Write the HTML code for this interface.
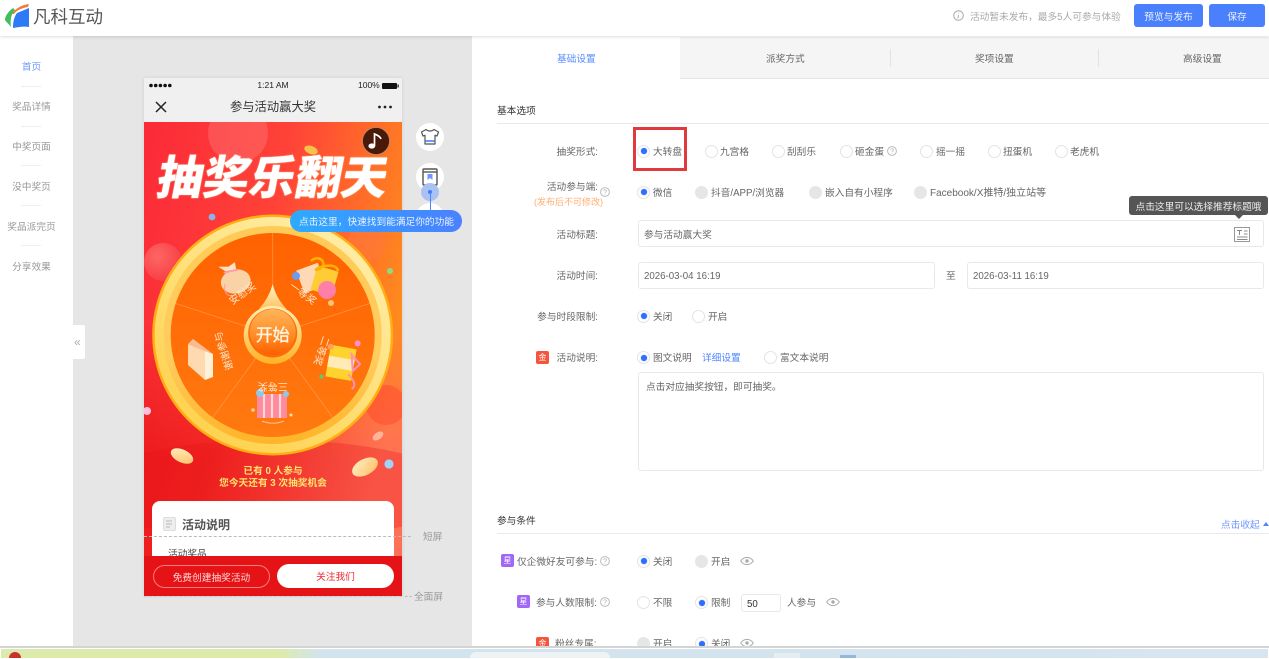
<!DOCTYPE html>
<html lang="zh-CN"><head><meta charset="utf-8"><title>凡科互动</title>
<style>
html,body{margin:0;padding:0;background:#fff}
#w{position:relative;width:1269px;height:659px;overflow:hidden;background:#fff;font:9.7px/14px "Liberation Sans","Noto Sans CJK SC",sans-serif;color:#666;filter:blur(.35px)}
#w div,#w span,#w i,#w svg{position:absolute;display:block}
.t{white-space:nowrap;height:14px;margin-top:2px}
.b{margin-top:0 !important}
.l{white-space:nowrap;height:14px;text-align:right;width:130px;left:468px;color:#666;margin-top:2px}
.r{width:13px;height:13px;box-sizing:border-box;border:1px solid #e3e3e3;border-radius:50%;background:#fff}
.on:after{content:"";position:absolute;left:2.5px;top:2.5px;width:6px;height:6px;border-radius:50%;background:#2f6fff;box-shadow:0 0 1px #2f6fff}
.d{background:#e6e6e6;border-color:#e6e6e6}
.in{box-sizing:border-box;border:1px solid #e8e8e8;border-radius:3px;background:#fff}
.ln{background:#e9e9e9;height:1px}
.sd{left:21px;width:20px;height:1px;background:#eee}
.st{left:0;width:63px;text-align:center;color:#999;height:14px;white-space:nowrap;margin-top:2px}
.bd{width:13px;height:13px;border-radius:2px;color:#fff;font-size:8px;line-height:13px;text-align:center}
</style></head><body><div id="w">

<!-- main backgrounds -->
<div style="left:73px;top:36px;width:399px;height:610px;background:#e6e6e6"></div>

<!-- sidebar -->
<div class="st" style="top:59px;color:#6f97ff">首页</div><div class="sd" style="top:86px"></div>
<div class="st" style="top:99px">奖品详情</div><div class="sd" style="top:126px"></div>
<div class="st" style="top:139px">中奖页面</div><div class="sd" style="top:165px"></div>
<div class="st" style="top:179px">没中奖页</div><div class="sd" style="top:205px"></div>
<div class="st" style="top:219px">奖品派完页</div><div class="sd" style="top:245px"></div>
<div class="st" style="top:259px">分享效果</div>
<div style="left:73px;top:325px;width:12px;height:34px;background:#fff;border-radius:0 2px 2px 0"></div>
<div class="t b" style="left:74px;top:335px;color:#aaa;font-size:12px">«</div>

<!-- phone -->
<div style="left:144px;top:78px;width:258px;height:518px;overflow:hidden;box-shadow:0 0 3px rgba(0,0,0,.12);background:#f0f0f0">
  <svg style="left:0;top:0" width="258" height="44" viewBox="0 0 258 44">
    <g fill="#111"><circle cx="7" cy="7.5" r="1.8"/><circle cx="11.7" cy="7.5" r="1.8"/><circle cx="16.4" cy="7.5" r="1.8"/><circle cx="21.1" cy="7.5" r="1.8"/><circle cx="25.8" cy="7.5" r="1.8"/>
    <rect x="238" y="5" width="15" height="6" rx="1"/><rect x="253.5" y="6.5" width="1.2" height="3"/></g>
    <path d="M12 24 L22 34 M22 24 L12 34" stroke="#222" stroke-width="1.5" fill="none"/>
    <g fill="#222"><circle cx="235.5" cy="29" r="1.4"/><circle cx="241" cy="29" r="1.4"/><circle cx="246.5" cy="29" r="1.4"/></g>
  </svg>
  <div class="t b" style="left:0;width:258px;top:0;text-align:center;font-size:8.5px;color:#222">1:21 AM</div>
  <div class="t b" style="left:214px;top:0;font-size:8.5px;color:#222">100%</div>
  <div class="t b" style="left:0;width:258px;top:22px;text-align:center;font-size:12.3px;color:#333">参与活动赢大奖</div>
</div>

<!-- phone art -->
<svg style="left:144px;top:122px" width="258" height="474" viewBox="144 122 258 474">
  <defs>
    <linearGradient id="bg" x1="0" y1="0" x2="1" y2=".38"><stop offset="0" stop-color="#fb2a38"/><stop offset=".5" stop-color="#ff4238"/><stop offset="1" stop-color="#ff8a1e"/></linearGradient>
    <linearGradient id="bg2" x1="0" y1="0" x2="1" y2=".55"><stop offset="0" stop-color="#e60d18"/><stop offset=".5" stop-color="#f02420"/><stop offset="1" stop-color="#ff7058"/></linearGradient>
    <linearGradient id="bgv" x1="0" y1="0" x2="0" y2="1"><stop offset="0" stop-color="#000"/><stop offset=".42" stop-color="#000"/><stop offset=".72" stop-color="#fff"/><stop offset="1" stop-color="#fff"/></linearGradient>
    <mask id="mk"><rect x="144" y="122" width="258" height="474" fill="url(#bgv)"/></mask>
    <linearGradient id="ring" x1=".9" y1="0" x2=".2" y2="1"><stop offset="0" stop-color="#fff0b0"/><stop offset=".5" stop-color="#ffe07a"/><stop offset="1" stop-color="#ffd04a"/></linearGradient>
    <linearGradient id="ring2" x1="0" y1="0" x2="0" y2="1"><stop offset="0" stop-color="#ffcb58"/><stop offset=".6" stop-color="#ffcc5e"/><stop offset="1" stop-color="#ffb428"/></linearGradient>
    <linearGradient id="pl" x1="0" y1="0" x2="0" y2="1"><stop offset="0" stop-color="#ff6200"/><stop offset="1" stop-color="#ff7a10"/></linearGradient>
    <linearGradient id="btn" x1="0" y1="0" x2="0" y2="1"><stop offset="0" stop-color="#ffb65a"/><stop offset=".6" stop-color="#ff8a24"/><stop offset="1" stop-color="#ff5f00"/></linearGradient>
    <linearGradient id="ptr" x1="0" y1="0" x2="0" y2="1"><stop offset="0" stop-color="#fff4d0"/><stop offset="1" stop-color="#ffc45e"/></linearGradient>
    <linearGradient id="bt2" x1="0" y1="0" x2="0" y2="1"><stop offset="0" stop-color="#fff0b8"/><stop offset="1" stop-color="#ffb224"/></linearGradient>
    <radialGradient id="bl" cx=".35" cy=".35" r=".8"><stop offset="0" stop-color="#ff8a80"/><stop offset="1" stop-color="#f23a4a"/></radialGradient>
    <linearGradient id="coin" x1="0" y1="0" x2="1" y2="1"><stop offset="0" stop-color="#fff0c8"/><stop offset="1" stop-color="#ffbe62"/></linearGradient>
  </defs>
  <rect x="144" y="122" width="258" height="474" fill="url(#bg)"/>
  <rect x="144" y="122" width="258" height="474" fill="url(#bg2)" mask="url(#mk)"/>
  <circle cx="238" cy="133" r="30" fill="#ff9a9a" opacity=".28"/>
  <circle cx="163" cy="262" r="19" fill="url(#bl)" opacity=".6"/>
  <circle cx="367" cy="242" r="19" fill="#ff7a3a" opacity=".6"/>
  <circle cx="386" cy="405" r="20" fill="#ff4a30" opacity=".55"/>
  <ellipse cx="272" cy="490" rx="190" ry="50" fill="#e8101c" opacity=".3"/>
  <!-- coins and beads -->
  <ellipse cx="182" cy="456" rx="12" ry="6.5" fill="url(#coin)" transform="rotate(25 182 456)"/>
  <ellipse cx="365" cy="467" rx="14" ry="8" fill="url(#coin)" transform="rotate(-28 365 467)"/>
  <ellipse cx="378" cy="436" rx="6" ry="3.5" fill="#ffb59a" transform="rotate(-35 378 436)"/>
  <ellipse cx="311" cy="150" rx="7" ry="4" fill="#f6c24c" transform="rotate(20 311 150)"/>
  <circle cx="212" cy="217" r="3.4" fill="#8fb0e8"/><circle cx="390" cy="271" r="3" fill="#8fdc7e"/>
  <circle cx="147" cy="411" r="4" fill="#ffc0de"/><circle cx="389" cy="464" r="4.6" fill="#9fd4f8"/>
  <!-- wheel -->
  <circle cx="272.7" cy="335" r="120.5" fill="#ffae14"/>
  <circle cx="272.7" cy="335" r="118" fill="url(#ring)"/>
  <circle cx="272.7" cy="335" r="109" fill="url(#ring2)"/>
  <circle cx="272.7" cy="335" r="102" fill="url(#pl)"/>
  <g stroke="#ff9a48" stroke-width=".8" opacity=".85">
    <path d="M272.7 335V233"/><path d="M272.7 335L369.7 303.5"/><path d="M272.7 335L332.7 417.5"/><path d="M272.7 335L212.7 417.5"/><path d="M272.7 335L175.7 303.5"/>
  </g>
  <!-- prize icons -->
  <g transform="translate(233 278) rotate(-12)">
    <ellipse cx="2" cy="4" rx="15" ry="12" fill="#f9d3a6"/><path d="M-6 -8L-12 -14L-2 -12L5 -15L5 -8Z" fill="#fbe2c4"/><path d="M-8 -7H7" stroke="#ff9ab0" stroke-width="1.6"/><path d="M-9 4C-13 14 -8 18 -2 17" stroke="#ff9ab0" fill="none"/>
  </g>
  <g transform="translate(317 278)">
    <rect x="-17" y="-14" width="23" height="24" fill="#ffd9b6" transform="rotate(-20)"/><rect x="-3" y="-12" width="22" height="25" fill="#ffcc36" transform="rotate(16)"/>
    <path d="M-6 -17C4 -26 14 -10 -2 -8 M-2 -8C8 -14 20 -14 21 -7" stroke="#ffb300" stroke-width="2.5" fill="none"/>
    <circle cx="10" cy="12" r="9" fill="#ff7fa8"/><circle cx="-21" cy="-2" r="4" fill="#6c9cf0"/><circle cx="14" cy="25" r="3" fill="#ffc27a"/>
  </g>
  <g transform="translate(342 363) rotate(10)">
    <rect x="-14" y="-16" width="26" height="32" fill="#ffd22e"/><rect x="-14" y="-5" width="26" height="11" fill="#ffeab8"/>
    <path d="M8 -10L12 6L18 -2Z M8 10C16 16 18 20 14 24" fill="none" stroke="#ff8fb4" stroke-width="2"/>
    <circle cx="12" cy="-22" r="3" fill="#ff8fd0"/><circle cx="-18" cy="17" r="2" fill="#55d070"/><circle cx="-14" cy="-14" r="3" fill="#ffa060"/>
  </g>
  <g transform="translate(272 407)">
    <rect x="-15" y="-13" width="30" height="24" fill="#ff8a9c"/><path d="M-8 -13V11M0 -13V11M8 -13V11" stroke="#ffd8dc" stroke-width="2.2"/><path d="M-10 14C-2 17 4 17 12 14" stroke="#ffc0a0" fill="none"/>
    <circle cx="-12" cy="-14" r="4" fill="#8cc8e8"/><circle cx="14" cy="-13" r="3" fill="#8cc8e8"/><circle cx="-19" cy="3" r="1.8" fill="#ffd0a0"/><circle cx="19" cy="8" r="1.5" fill="#ffe0c0"/>
  </g>
  <g transform="translate(203 357)">
    <path d="M-15 -13L2 -6V23L-15 8Z" fill="#ffd9b0"/><path d="M2 -6L10 -3V20L2 23Z" fill="#fff0d8"/><path d="M-15 -13L-10 -18L10 -3L2 -6Z" fill="#f7bd90"/>
  </g>
  <g fill="#ffe8cc" font-size="10" text-anchor="middle" font-family="'Liberation Sans','Noto Sans CJK SC',sans-serif">
    <text transform="translate(272.7 335) rotate(-36) translate(0 -48)">安慰奖</text>
    <text transform="translate(272.7 335) rotate(36) translate(0 -48)">一等奖</text>
    <text transform="translate(272.7 335) rotate(108) translate(0 -48)">二等奖</text>
    <text transform="translate(272.7 335) rotate(180) translate(0 -48)">三等奖</text>
    <text transform="translate(272.7 335) rotate(252) translate(0 -48)">谢谢参与</text>
  </g>
  <path d="M272.7 284Q269 298 259 309H286.5Q276 298 272.7 284Z" fill="url(#ptr)"/>
  <circle cx="272.7" cy="335" r="29" fill="url(#bt2)"/>
  <circle cx="272.7" cy="333" r="24.5" fill="#ff6a08"/>
  <circle cx="272.7" cy="332" r="23" fill="url(#btn)"/>
  <text x="272.7" y="341" text-anchor="middle" font-size="17" fill="#fff3dc" stroke="#fff3dc" stroke-width=".4" font-family="'Liberation Sans','Noto Sans CJK SC',sans-serif">开始</text>
  <!-- music -->
  <circle cx="376" cy="141" r="13.5" fill="#4a1a08" stroke="#b98668" stroke-width=".8"/>
  <path d="M374.5 146V134C377 135 380 136 381 139" stroke="#fff" stroke-width="1.7" fill="none"/>
  <ellipse cx="371.8" cy="146" rx="3.4" ry="2.6" fill="#fff"/>
</svg>

<div class="t b" style="left:158px;top:148px;height:60px;font-size:46px;line-height:60px;font-weight:900;color:#fff;transform:skewX(-11deg);text-shadow:0 0 1.5px #ffd8a0">抽奖乐翻天</div>
<div class="t" style="left:144px;width:258px;top:463px;text-align:center;color:#ffe36e;font-weight:700">已有 0 人参与</div>
<div class="t" style="left:144px;width:258px;top:475px;text-align:center;color:#ffe36e;font-weight:700">您今天还有 3 次抽奖机会</div>

<div style="left:152px;top:501px;width:242px;height:60px;background:#fff;border-radius:8px 8px 0 0"></div>
<svg style="left:163px;top:517px" width="14" height="15" viewBox="0 0 14 15"><rect x=".5" y=".5" width="12" height="13" rx="1.5" fill="#eee" stroke="#ddd"/><path d="M3 4H9M3 7H9M3 10H7" stroke="#bbb"/></svg>
<div class="t b" style="left:182px;top:517px;height:17px;line-height:17px;font-size:12px;font-weight:700;color:#555">活动说明</div>
<div class="t" style="left:168px;top:546px;color:#444">活动奖品</div>
<div style="left:144px;top:556px;width:258px;height:40px;background:#e51216"></div>
<div class="t b" style="left:153px;top:565px;width:117px;height:23px;box-sizing:border-box;border:1px solid #f57e80;border-radius:12px;text-align:center;line-height:25px;color:#ffd8d8">免费创建抽奖活动</div>
<div class="t b" style="left:277px;top:564px;width:117px;height:24px;background:#fff;border-radius:12px;text-align:center;line-height:28px;color:#ee2a36">关注我们</div>
<div style="left:144px;top:536px;width:267px;height:0;border-top:1px dashed #bbb"></div>
<div class="t" style="left:423px;top:529px;color:#999">短屏</div>
<div style="left:405px;top:596px;width:7px;height:0;border-top:1px dashed #bbb"></div>
<div style="left:144px;top:596px;width:258px;height:0;border-top:1px dashed #ccc"></div>
<div class="t" style="left:414px;top:589px;color:#999">全面屏</div>

<!-- side icons -->
<div style="left:416px;top:123px;width:28px;height:28px;border-radius:50%;background:#fff"></div>
<div style="left:416px;top:163px;width:28px;height:28px;border-radius:50%;background:#fff"></div>
<div style="left:416px;top:203px;width:28px;height:28px;border-radius:50%;background:#fff"></div>
<svg style="left:420px;top:127px" width="20" height="20" viewBox="0 0 20 20"><path d="M6 2.5C8 4.5 12 4.5 14 2.5L18.5 5L17 9L15 8.3V17H5V8.3L3 9L1.5 5Z" fill="none" stroke="#555" stroke-width="1.2" stroke-linejoin="round"/><rect x="5.6" y="13" width="8.8" height="2" fill="#6f97ff"/></svg>
<svg style="left:422px;top:168px" width="16" height="18" viewBox="0 0 16 18"><rect x="1" y="1" width="14" height="16" rx="1" fill="none" stroke="#555" stroke-width="1.4"/><path d="M1 4H15" stroke="#555" stroke-width="1.4"/><path d="M5.5 6V12L8 10L10.5 12V6Z" fill="#6f97ff"/></svg>
<div style="left:421px;top:183px;width:18px;height:18px;border-radius:50%;background:#a9c2f3"></div>
<div style="left:428px;top:190px;width:4px;height:4px;border-radius:50%;background:#3d7bff"></div>
<div style="left:429.5px;top:192px;width:1px;height:18px;background:#4b85ff"></div>
<div class="t b" style="left:290px;top:210px;width:172px;height:22px;line-height:26px;border-radius:11px;box-sizing:border-box;padding-left:9px;color:#e8f3ff;background:linear-gradient(90deg,#2eaaff,#4b80ff)">点击这里，快速找到能满足你的功能</div>

<!-- right panel tabs -->
<div style="left:680px;top:37px;width:589px;height:41px;background:#f5f5f5;border-bottom:1px solid #e6e6e6;box-sizing:content-box"></div>
<div style="left:890px;top:49px;width:1px;height:18px;background:#e2e2e2"></div>
<div style="left:1098px;top:49px;width:1px;height:18px;background:#e2e2e2"></div>
<div class="t" style="left:557px;top:51px;color:#5b8cff">基础设置</div>
<div class="t" style="left:766px;top:51px">派奖方式</div>
<div class="t" style="left:975px;top:51px">奖项设置</div>
<div class="t" style="left:1183px;top:51px">高级设置</div>

<!-- section 1 -->
<div class="t" style="left:497px;top:103px;color:#333">基本选项</div>
<div class="ln" style="left:497px;top:123px;width:772px"></div>

<div class="l" style="top:144px">抽奖形式:</div>
<i class="r on" style="left:637px;top:144.5px"></i><div class="t" style="left:653px;top:144px">大转盘</div>
<i class="r" style="left:705px;top:144.5px"></i><div class="t" style="left:720px;top:144px">九宫格</div>
<i class="r" style="left:772px;top:144.5px"></i><div class="t" style="left:787px;top:144px">刮刮乐</div>
<i class="r" style="left:840px;top:144.5px"></i><div class="t" style="left:855px;top:144px">砸金蛋</div>
<svg style="left:887px;top:146px" width="10" height="10" viewBox="0 0 10 10"><circle cx="5" cy="5" r="4.4" fill="none" stroke="#bbb"/><path d="M3.6 3.8C3.8 2.4 6.4 2.4 6.4 3.9C6.4 5 5 5 5 6.2M5 7.2V7.9" fill="none" stroke="#bbb" stroke-width=".8"/></svg>
<i class="r" style="left:920px;top:144.5px"></i><div class="t" style="left:936px;top:144px">摇一摇</div>
<i class="r" style="left:988px;top:144.5px"></i><div class="t" style="left:1003px;top:144px">扭蛋机</div>
<i class="r" style="left:1055px;top:144.5px"></i><div class="t" style="left:1070px;top:144px">老虎机</div>
<div style="left:633px;top:127px;width:54px;height:44px;box-sizing:border-box;border:3.5px solid #e03a3e"></div>

<div class="l" style="top:179px">活动参与端:</div>
<div class="t" style="left:534px;top:193px;font-size:9px;color:#ffae70">(发布后不可修改)</div>
<svg style="left:600px;top:187px" width="10" height="10" viewBox="0 0 10 10"><circle cx="5" cy="5" r="4.4" fill="none" stroke="#bbb"/><path d="M3.6 3.8C3.8 2.4 6.4 2.4 6.4 3.9C6.4 5 5 5 5 6.2M5 7.2V7.9" fill="none" stroke="#bbb" stroke-width=".8"/></svg>
<i class="r on" style="left:637px;top:185.5px"></i><div class="t" style="left:653px;top:185px">微信</div>
<i class="r d" style="left:695px;top:185.5px"></i><div class="t" style="left:711px;top:185px">抖音/APP/浏览器</div>
<i class="r d" style="left:809px;top:185.5px"></i><div class="t" style="left:825px;top:185px">嵌入自有小程序</div>
<i class="r d" style="left:914px;top:185.5px"></i><div class="t" style="left:930px;top:185px;font-size:10px">Facebook/X推特/独立站等</div>

<div class="l" style="top:227px">活动标题:</div>
<div class="in" style="left:638px;top:220px;width:626px;height:27px"></div>
<div class="t" style="left:644px;top:227px">参与活动赢大奖</div>
<svg style="left:1234px;top:227px" width="16" height="15" viewBox="0 0 16 15"><rect x=".5" y=".5" width="15" height="14" fill="none" stroke="#999"/><path d="M3 3.5H8M5.5 3.5V8M10 4H13.5M10 7H13.5M3 10H13.5M3 12.5H13.5" fill="none" stroke="#888"/></svg>
<div class="t b" style="left:1129px;top:196px;width:139px;height:19px;line-height:23px;background:#555;border-radius:3px;color:#eee;text-align:center">点击这里可以选择推荐标题哦</div>
<div style="left:1235px;top:215px;width:0;height:0;border-left:4px solid transparent;border-right:4px solid transparent;border-top:4px solid #555"></div>

<div class="l" style="top:268px">活动时间:</div>
<div class="in" style="left:638px;top:262px;width:297px;height:27px"></div>
<div class="t" style="left:644px;top:268px">2026-03-04 16:19</div>
<div class="t" style="left:946px;top:268px">至</div>
<div class="in" style="left:967px;top:262px;width:297px;height:27px"></div>
<div class="t" style="left:973px;top:268px">2026-03-11 16:19</div>

<div class="l" style="top:309px">参与时段限制:</div>
<i class="r on" style="left:637px;top:309.5px"></i><div class="t" style="left:653px;top:309px">关闭</div>
<i class="r" style="left:692px;top:309.5px"></i><div class="t" style="left:708px;top:309px">开启</div>

<div class="bd" style="left:536px;top:351px;background:#f4553c">金</div>
<div class="l" style="top:350px">活动说明:</div>
<i class="r on" style="left:637px;top:351px"></i><div class="t" style="left:653px;top:350px">图文说明</div>
<div class="t" style="left:702px;top:350px;color:#4f86ff">详细设置</div>
<i class="r" style="left:764px;top:351px"></i><div class="t" style="left:780px;top:350px">富文本说明</div>
<div class="in" style="left:638px;top:372px;width:626px;height:99px"></div>
<div class="t" style="left:646px;top:379px">点击对应抽奖按钮，即可抽奖。</div>

<!-- section 2 -->
<div class="t" style="left:497px;top:513px;color:#333">参与条件</div>
<div class="ln" style="left:497px;top:533px;width:772px"></div>
<div class="t" style="left:1221px;top:517px;color:#6f97ff">点击收起</div>
<div style="left:1263px;top:522px;width:0;height:0;border-left:3px solid transparent;border-right:3px solid transparent;border-top:0;border-bottom:4px solid #4f86ff"></div>

<div class="bd" style="left:501px;top:554px;background:#a068f5">星</div>
<div class="t" style="left:517px;top:554px">仅企微好友可参与:</div>
<svg style="left:600px;top:556px" width="10" height="10" viewBox="0 0 10 10"><circle cx="5" cy="5" r="4.4" fill="none" stroke="#bbb"/><path d="M3.6 3.8C3.8 2.4 6.4 2.4 6.4 3.9C6.4 5 5 5 5 6.2M5 7.2V7.9" fill="none" stroke="#bbb" stroke-width=".8"/></svg>
<i class="r on" style="left:637px;top:554.5px"></i><div class="t" style="left:653px;top:554px">关闭</div>
<i class="r d" style="left:695px;top:554.5px"></i><div class="t" style="left:711px;top:554px">开启</div>
<svg style="left:740px;top:556px" width="14" height="10" viewBox="0 0 14 10"><path d="M.7 5C4 .2 10 .2 13.3 5C10 9.8 4 9.8 .7 5Z" fill="none" stroke="#aaa"/><circle cx="7" cy="5" r="1.7" fill="#aaa"/></svg>

<div class="bd" style="left:517px;top:595px;background:#a068f5">星</div>
<div class="t" style="left:536px;top:595px">参与人数限制:</div>
<svg style="left:600px;top:597px" width="10" height="10" viewBox="0 0 10 10"><circle cx="5" cy="5" r="4.4" fill="none" stroke="#bbb"/><path d="M3.6 3.8C3.8 2.4 6.4 2.4 6.4 3.9C6.4 5 5 5 5 6.2M5 7.2V7.9" fill="none" stroke="#bbb" stroke-width=".8"/></svg>
<i class="r" style="left:637px;top:596px"></i><div class="t" style="left:653px;top:595px">不限</div>
<i class="r on" style="left:695px;top:596px"></i><div class="t" style="left:711px;top:595px">限制</div>
<div class="in" style="left:741px;top:594px;width:40px;height:18px"></div>
<div class="t" style="left:747px;top:596px;color:#333">50</div>
<div class="t" style="left:787px;top:595px">人参与</div>
<svg style="left:826px;top:597px" width="14" height="10" viewBox="0 0 14 10"><path d="M.7 5C4 .2 10 .2 13.3 5C10 9.8 4 9.8 .7 5Z" fill="none" stroke="#aaa"/><circle cx="7" cy="5" r="1.7" fill="#aaa"/></svg>

<div class="bd" style="left:536px;top:637px;background:#f4553c">金</div>
<div class="t" style="left:555px;top:636px">粉丝专属:</div>
<i class="r d" style="left:637px;top:637px"></i><div class="t" style="left:653px;top:636px">开启</div>
<i class="r on" style="left:695px;top:637px"></i><div class="t" style="left:711px;top:636px">关闭</div>
<svg style="left:740px;top:638px" width="14" height="10" viewBox="0 0 14 10"><path d="M.7 5C4 .2 10 .2 13.3 5C10 9.8 4 9.8 .7 5Z" fill="none" stroke="#aaa"/><circle cx="7" cy="5" r="1.7" fill="#aaa"/></svg>

<!-- bottom strip -->
<div style="left:0;top:646px;width:1269px;height:13px;background:#fff;overflow:hidden">
  <div style="left:0;top:0;width:1269px;height:2px;background:#d4d4d4"></div>
  <div style="left:1px;top:3px;width:1267px;height:9px;background:linear-gradient(90deg,#dcebac 0,#dcebac 280px,#d2e4ee 320px,#d6e5f0 100%)"></div>
  <div style="left:9px;top:6px;width:12px;height:12px;border-radius:50%;background:#c93030"></div>
  <div style="left:470px;top:6px;width:140px;height:8px;background:#eef3f6;border-radius:6px 6px 0 0"></div>
  <div style="left:774px;top:7px;width:26px;height:6px;background:#e4eef3"></div>
  <div style="left:840px;top:9px;width:16px;height:4px;background:#93b8e0"></div>
  <div style="left:0;top:12px;width:1269px;height:1px;background:#fff"></div>
</div>

<!-- header -->
<div style="left:0;top:0;width:1269px;height:36px;background:#fff;box-shadow:0 1px 3px rgba(0,0,0,.14)"></div>
<svg style="left:4px;top:3px" width="27" height="26" viewBox="0 0 27 26">
  <path d="M9 5C4 9 1 13 1 17C3 20 6 22 7 24C6 17 7 11 11 7Z" fill="#3fbd5f"/>
  <path d="M8 11C11 6 17 2 25 1L24 4C18 5 13 7 10 11Z" fill="#f47a3a"/>
  <path d="M13 10L25 5V24C20 23 14 24 9 25C9 19 10 14 13 10Z" fill="#2d7bf4"/>
</svg>
<div class="t b" style="left:33px;top:5px;height:24px;line-height:24px;font-size:17.5px;color:#555">凡科互动</div>
<svg style="left:953px;top:10px" width="11" height="11" viewBox="0 0 11 11"><circle cx="5.5" cy="5.5" r="4.8" fill="none" stroke="#aaa"/><path d="M5.8 2.6V3.4M5.5 4.8L5 8.4" stroke="#aaa" fill="none"/></svg>
<div class="t" style="left:970px;top:9px;color:#aaa">活动暂未发布，最多5人可参与体验</div>
<div class="t b" style="left:1134px;top:4px;width:69px;height:23px;line-height:28px;background:#4a80fb;border-radius:3px;color:#eaf0ff;text-align:center">预览与发布</div>
<div class="t b" style="left:1209px;top:4px;width:56px;height:23px;line-height:28px;background:#4a80fb;border-radius:3px;color:#eaf0ff;text-align:center">保存</div>

</div></body></html>
